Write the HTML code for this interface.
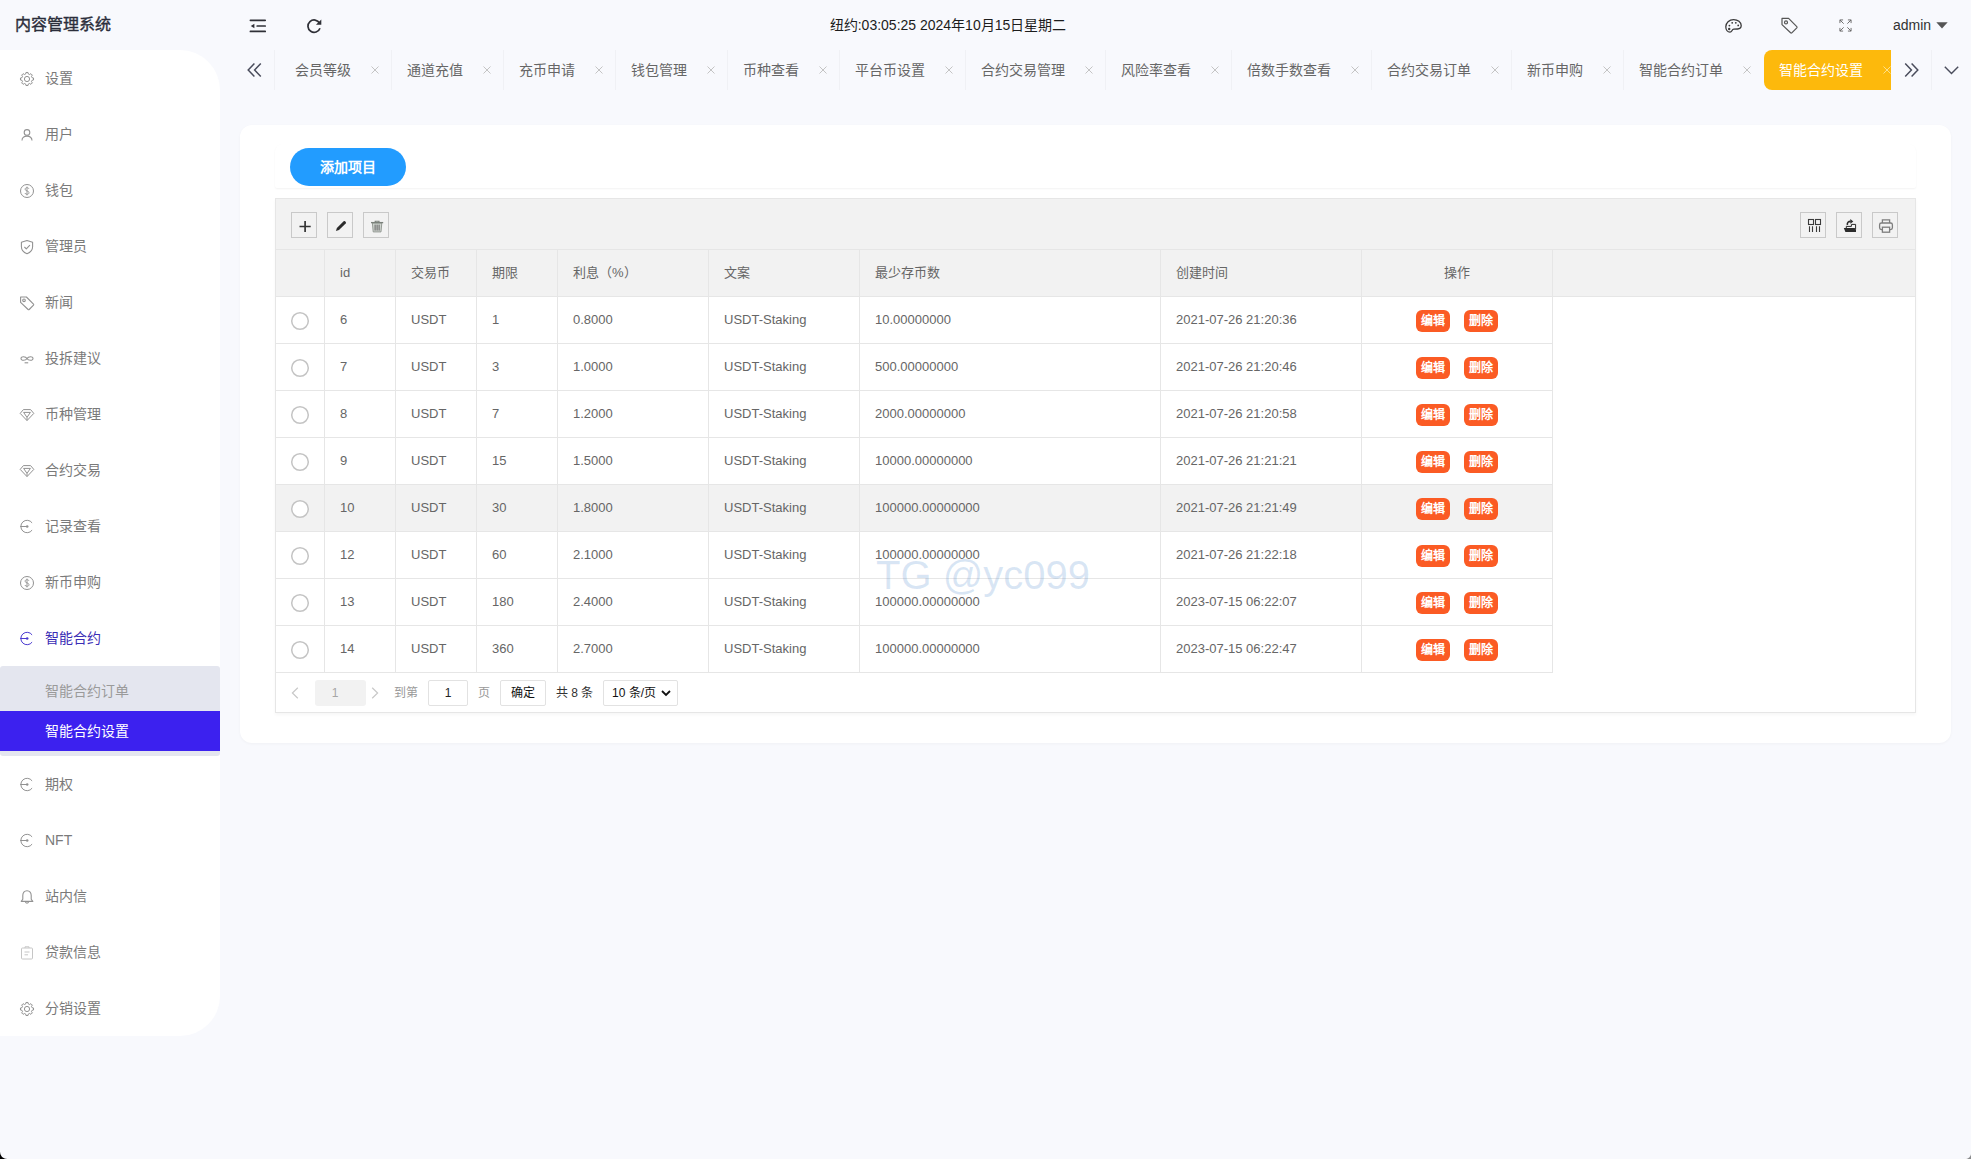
<!DOCTYPE html>
<html lang="zh-CN">
<head>
<meta charset="utf-8">
<title>内容管理系统</title>
<style>
*{box-sizing:border-box;margin:0;padding:0}
html,body{width:1971px;height:1159px;overflow:hidden}
body{position:relative;background:#f8f9fd;font-family:"Liberation Sans",sans-serif;font-size:14px;color:#666;line-height:1}
svg{display:block;overflow:visible}
.abs{position:absolute}
/* ---------- sidebar ---------- */
.logo{position:absolute;left:15px;top:0;height:50px;line-height:49px;font-size:16px;font-weight:500;-webkit-text-stroke:.4px #2b2e3b;color:#2b2e3b;white-space:nowrap;letter-spacing:0}
.side{position:absolute;left:0;top:50px;width:220px;height:986px;background:#fff;border-radius:0 40px 40px 0;overflow:hidden}
.nav{position:absolute;left:0;width:220px;height:56px;line-height:56px;color:#7a7a7a;white-space:nowrap}
.nav svg{position:absolute;left:19px;top:21px;width:16px;height:16px;color:#929292}
.nav.on svg{color:#4a3ad0}
.nav span{position:absolute;left:45px;top:0}
.nav.on{color:#3b2db5}
.sub{position:absolute;left:0;top:616px;width:220px;height:90px;background:#e4e6ef;border-radius:3px}
.sub div{position:absolute;left:0;width:220px;height:40px;line-height:40px;padding-left:45px;color:#9a9a9a;white-space:nowrap}
.sub .act{background:#3c21ef;color:#fff}
/* ---------- header ---------- */
.clock{position:absolute;left:748px;width:400px;top:0;height:50px;line-height:50px;text-align:center;color:#1c1c1c;white-space:nowrap}
.admin{position:absolute;left:1893px;top:0;height:50px;line-height:50px;color:#333;white-space:nowrap}
/* ---------- tabs ---------- */
.tab{position:absolute;top:50px;height:40px;line-height:40px;color:#666;white-space:nowrap;border-right:1px solid #f0f1f5}
.tab span{position:absolute;left:15px;top:0}
.tab svg{position:absolute;right:12px;top:16px;width:8px;height:8px}
.tab.act{background:#fdb90c;color:#fff;border:0;border-radius:8px 0 0 8px;overflow:hidden}
.vsep{position:absolute;top:50px;width:1px;height:40px;background:#f0f1f5}
/* ---------- card ---------- */
.card{position:absolute;left:240px;top:125px;width:1711px;height:618px;background:#fff;border-radius:12px;box-shadow:0 1px 3px rgba(0,0,0,.035)}
.inner{position:absolute;left:275px;top:144px;width:1641px;height:44px;background:#fff;border-radius:8px 8px 2px 2px;box-shadow:0 1px 2px rgba(0,0,0,.05)}
.addbtn{position:absolute;left:290px;top:148px;width:116px;height:38px;line-height:38px;border-radius:19px;background:#229cff;color:#fff;font-weight:bold;text-align:center;white-space:nowrap}

/* ---------- table ---------- */
.tbox{position:absolute;left:275px;top:198px;width:1641px;height:515px;border:1px solid #e6e6e6;background:#fff;box-shadow:0 2px 3px rgba(0,0,0,.035)}
.tool{position:absolute;left:276px;top:199px;width:1639px;height:51px;background:#f2f2f2;border-bottom:1px solid #e6e6e6}
.tb{position:absolute;top:212px;width:26px;height:26px;border:1px solid #c9c9c9}
.tb svg{position:absolute;left:0;top:0;width:24px;height:24px}
.thead{position:absolute;left:276px;top:250px;width:1639px;height:47px;background:#f2f2f2;border-bottom:1px solid #e6e6e6}
.tr{position:absolute;left:276px;width:1277px;height:47px;border-bottom:1px solid #e6e6e6;background:#fff}
.tr.hov{background:#f2f2f2}
.c{position:absolute;top:0;height:46px;line-height:46px;font-size:13px;padding-left:15px;border-right:1px solid #e6e6e6;color:#666;white-space:nowrap;overflow:hidden}
.c0{left:0;width:49px}.c1{left:49px;width:71px}.c2{left:120px;width:81px}.c3{left:201px;width:81px}.c4{left:282px;width:151px}.c5{left:433px;width:151px}.c6{left:584px;width:301px}.c7{left:885px;width:201px}.c8{left:1086px;width:191px;padding-left:0}
.thead .c8{text-align:center}
.tr .c{line-height:45px}
.radio{position:absolute;left:14px;top:13.5px;width:20px;height:20px}
.ab{position:absolute;top:13px;width:34px;height:22px;line-height:22px;border-radius:6px;background:#fb5b24;color:#fff;font-size:12px;font-weight:bold;text-align:center}
.ab.e{left:54px}.ab.d{left:102px}
/* ---------- pager ---------- */
.pg{position:absolute;top:680px;height:26px;line-height:26px;font-size:12px;color:#333;white-space:nowrap}
.pgb{border:1px solid #e2e2e2;border-radius:2px;background:#fff;text-align:center;line-height:24px}
.wm{position:absolute;left:876px;top:553px;font-size:40px;line-height:44px;color:rgba(80,140,205,.22);white-space:nowrap;letter-spacing:0}
</style>
</head>
<body>
<svg width="0" height="0" style="position:absolute">
<defs>
<g id="i-gear" fill="none" stroke="currentColor" stroke-width="1"><path d="M14.52 6.97 L14.52 9.03 L13.04 9.29 L12.48 10.65 L13.34 11.88 L11.88 13.34 L10.65 12.48 L9.29 13.04 L9.03 14.52 L6.97 14.52 L6.71 13.04 L5.35 12.48 L4.12 13.34 L2.66 11.88 L3.52 10.65 L2.96 9.29 L1.48 9.03 L1.48 6.97 L2.96 6.71 L3.52 5.35 L2.66 4.12 L4.12 2.66 L5.35 3.52 L6.71 2.96 L6.97 1.48 L9.03 1.48 L9.29 2.96 L10.65 3.52 L11.88 2.66 L13.34 4.12 L12.48 5.35 L13.04 6.71Z" stroke-linejoin="round"/><circle cx="8" cy="8" r="2.6"/></g>
<g id="i-user" fill="none" stroke="currentColor" stroke-width="1.1"><circle cx="8" cy="5.4" r="2.8"/><path d="M3 13.4 C3 10.6 5.2 9.1 8 9.1 S13 10.6 13 13.4"/></g>
<g id="i-dollar" fill="none" stroke="currentColor" stroke-width="1"><circle cx="8" cy="8" r="6.5"/><path d="M10 5.9 C9.6 5 8.8 4.7 8 4.7 C6.9 4.7 6.1 5.3 6.1 6.2 C6.1 8.3 10 7.5 10 9.7 C10 10.7 9.1 11.3 8 11.3 C7 11.3 6.2 10.9 5.9 10 M8 3.6 V12.4" stroke-width=".9"/></g>
<g id="i-shield" fill="none" stroke="currentColor" stroke-width="1.1" stroke-linejoin="round"><path d="M8 1.4 L13.6 3.3 V7.8 C13.6 11.4 10.6 13.8 8 14.8 C5.4 13.8 2.4 11.4 2.4 7.8 V3.3 Z"/><path d="M5.4 8 L7.3 9.9 L10.9 6.2"/></g>
<g id="i-tag" fill="none" stroke="currentColor" stroke-width="1.1" stroke-linejoin="round"><path d="M1.6 2 H7.4 L14.5 9.1 a.8 .8 0 0 1 0 1.1 L10.2 14.5 a.8 .8 0 0 1 -1.1 0 L1.6 7.4 Z"/><circle cx="5" cy="5.3" r="1.3"/></g>
<g id="i-link" fill="none" stroke="currentColor" stroke-width="1.1"><path d="M8 7.5 C6.6 5.2 2 5 2 7.5 S6.6 9.8 8 7.5 S14 5 14 7.5 S9.4 9.8 8 7.5Z"/><path d="M5.6 11.8 H9.2"/></g>
<g id="i-diamond" fill="none" stroke="currentColor" stroke-width="1" stroke-linejoin="round"><path d="M4.4 2.6 H11.6 L14.8 6.4 L8 13.6 L1.2 6.4 Z"/><path d="M4.6 5.4 H11.4 L8 10.4 Z M8 10.4 V13.4"/></g>
<g id="i-dotc" fill="none" stroke="currentColor" stroke-width="1"><path d="M13.1 3.9 A6.2 6.2 0 1 0 13.1 11.1"/><path d="M1.2 7.5 H8"/><circle cx="8.2" cy="7.5" r="1.25" fill="currentColor" stroke="none"/></g>
<g id="i-bell" fill="none" stroke="currentColor" stroke-width="1.1" stroke-linejoin="round"><path d="M8 1.8 C5.2 1.8 3.8 3.9 3.8 6.6 V10.2 L2.2 12.4 H13.8 L12.2 10.2 V6.6 C12.2 3.9 10.8 1.8 8 1.8 Z"/><path d="M6.4 12.6 a1.6 1.6 0 0 0 3.2 0"/></g>
<g id="i-clip" fill="none" stroke="currentColor" stroke-width="1"><rect x="2.5" y="3" width="11" height="11" rx="1"/><path d="M6 3 V1.8 H10 V3 M5.5 7 H10.5 M5.5 9.8 H9"/></g>
<g id="i-x" fill="none" stroke="currentColor" stroke-width="1"><path d="M.5 .5 L7.5 7.5 M7.5 .5 L.5 7.5"/></g>
</defs>
</svg>
<!-- SIDEBAR -->
<div class="logo">内容管理系统</div>
<div class="side">
<div class="nav" style="top:0px"><svg viewBox="0 0 16 16"><use href="#i-gear"/></svg><span>设置</span></div>
<div class="nav" style="top:56px"><svg viewBox="0 0 16 16"><use href="#i-user"/></svg><span>用户</span></div>
<div class="nav" style="top:112px"><svg viewBox="0 0 16 16"><use href="#i-dollar"/></svg><span>钱包</span></div>
<div class="nav" style="top:168px"><svg viewBox="0 0 16 16"><use href="#i-shield"/></svg><span>管理员</span></div>
<div class="nav" style="top:224px"><svg viewBox="0 0 16 16"><use href="#i-tag"/></svg><span>新闻</span></div>
<div class="nav" style="top:280px"><svg viewBox="0 0 16 16"><use href="#i-link"/></svg><span>投拆建议</span></div>
<div class="nav" style="top:336px"><svg viewBox="0 0 16 16"><use href="#i-diamond"/></svg><span>币种管理</span></div>
<div class="nav" style="top:392px"><svg viewBox="0 0 16 16"><use href="#i-diamond"/></svg><span>合约交易</span></div>
<div class="nav" style="top:448px"><svg viewBox="0 0 16 16"><use href="#i-dotc"/></svg><span>记录查看</span></div>
<div class="nav" style="top:504px"><svg viewBox="0 0 16 16"><use href="#i-dollar"/></svg><span>新币申购</span></div>
<div class="nav on" style="top:560px"><svg viewBox="0 0 16 16"><use href="#i-dotc"/></svg><span>智能合约</span></div>
<div class="sub"><div style="top:5px">智能合约订单</div><div class="act" style="top:45px">智能合约设置</div></div>
<div class="nav" style="top:706px;"><svg viewBox="0 0 16 16"><use href="#i-dotc"/></svg><span>期权</span></div>
<div class="nav" style="top:762px;"><svg viewBox="0 0 16 16"><use href="#i-dotc"/></svg><span>NFT</span></div>
<div class="nav" style="top:818px;"><svg viewBox="0 0 16 16"><use href="#i-bell"/></svg><span>站内信</span></div>
<div class="nav" style="top:874px;"><svg viewBox="0 0 16 16" style="color:#c6c6c6"><use href="#i-clip"/></svg><span>贷款信息</span></div>
<div class="nav" style="top:930px;"><svg viewBox="0 0 16 16"><use href="#i-gear"/></svg><span>分销设置</span></div>
</div>
<!-- HEADER -->
<div id="header">
<svg class="abs" style="left:250px;top:19px" width="16" height="14" viewBox="0 0 16 14"><path d="M.4 1.3 H15.2 M7.2 7 H15.2 M.4 12.4 H15.2" stroke="#2f3037" stroke-width="1.7" fill="none" stroke-linecap="round"/><path d="M.8 7 L4.4 4.8 V9.2 Z" fill="#2f3037"/></svg>
<svg class="abs" style="left:306px;top:18px" width="16" height="16" viewBox="0 0 16 16"><path d="M13.6 5.2 A6.2 6.2 0 1 0 14 10.2" stroke="#2f3037" stroke-width="1.7" fill="none"/><path d="M15.3 1.4 V6.8 H9.9 Z" fill="#2f3037"/></svg>
<div class="clock">纽约:03:05:25 2024年10月15日星期二</div>
<svg class="abs" style="left:1725px;top:18px" width="17" height="16" viewBox="0 0 17 16" fill="none" stroke="#3a3a3a" stroke-width="1.3"><path d="M8.6 1.6 C4.2 1.6 .8 4.8 .8 8.8 C.8 11.8 2.6 14.2 5 14.2 C7.2 14.2 6.6 11.4 8.8 11.2 L12.6 11 C14.8 10.9 16.2 9.6 16.2 7.6 C16.2 4.2 12.8 1.6 8.6 1.6 Z"/><circle cx="4.4" cy="7.6" r=".9" fill="#3a3a3a" stroke="none"/><circle cx="7.2" cy="4.8" r=".9" fill="#3a3a3a" stroke="none"/><circle cx="10.8" cy="4.8" r=".9" fill="#3a3a3a" stroke="none"/><circle cx="13.2" cy="7.4" r=".9" fill="#3a3a3a" stroke="none"/><circle cx="4.2" cy="11" r="1.2" fill="#3a3a3a" stroke="none"/></svg>
<svg class="abs" style="left:1781px;top:17px" width="17" height="17" viewBox="0 0 17 17" fill="none" stroke="#555" stroke-width="1.2" stroke-linejoin="round"><path d="M1 1.4 H7.6 L15.8 9.6 a.9 .9 0 0 1 0 1.2 L10.8 15.8 a.9 .9 0 0 1 -1.2 0 L1 7.6 Z"/><circle cx="5" cy="5.4" r="1.5"/></svg>
<svg class="abs" style="left:1838.5px;top:19.2px" width="13" height="13" viewBox="0 0 14 14" fill="none" stroke="#666" stroke-width="1"><path d="M1 4.4 V1 H4.4 M1 1 L5 5 M9.6 1 H13 V4.4 M13 1 L9 5 M1 9.6 V13 H4.4 M1 13 L5 9 M13 9.6 V13 H9.6 M13 13 L9 9"/></svg>
<div class="admin">admin</div>
<svg class="abs" style="left:1936px;top:22px" width="12" height="7" viewBox="0 0 12 7"><path d="M.3 .3 H11.7 L6 6.6 Z" fill="#555"/></svg>
</div>
<!-- TABS -->
<div id="tabs">
<svg class="abs" style="left:247px;top:63px" width="15" height="14" viewBox="0 0 15 14" fill="none" stroke="#4a4d5c" stroke-width="1.5"><path d="M7.4 .6 L1.2 7 L7.4 13.4 M13.8 .6 L7.6 7 L13.8 13.4"/></svg>
<div class="vsep" style="left:274px"></div>
<div class="tab" style="left:280px;width:112px"><span>会员等级</span><svg viewBox="0 0 8 8" style="color:#c4c4c4"><use href="#i-x"/></svg></div>
<div class="tab" style="left:392px;width:112px"><span>通道充值</span><svg viewBox="0 0 8 8" style="color:#c4c4c4"><use href="#i-x"/></svg></div>
<div class="tab" style="left:504px;width:112px"><span>充币申请</span><svg viewBox="0 0 8 8" style="color:#c4c4c4"><use href="#i-x"/></svg></div>
<div class="tab" style="left:616px;width:112px"><span>钱包管理</span><svg viewBox="0 0 8 8" style="color:#c4c4c4"><use href="#i-x"/></svg></div>
<div class="tab" style="left:728px;width:112px"><span>币种查看</span><svg viewBox="0 0 8 8" style="color:#c4c4c4"><use href="#i-x"/></svg></div>
<div class="tab" style="left:840px;width:126px"><span>平台币设置</span><svg viewBox="0 0 8 8" style="color:#c4c4c4"><use href="#i-x"/></svg></div>
<div class="tab" style="left:966px;width:140px"><span>合约交易管理</span><svg viewBox="0 0 8 8" style="color:#c4c4c4"><use href="#i-x"/></svg></div>
<div class="tab" style="left:1106px;width:126px"><span>风险率查看</span><svg viewBox="0 0 8 8" style="color:#c4c4c4"><use href="#i-x"/></svg></div>
<div class="tab" style="left:1232px;width:140px"><span>倍数手数查看</span><svg viewBox="0 0 8 8" style="color:#c4c4c4"><use href="#i-x"/></svg></div>
<div class="tab" style="left:1372px;width:140px"><span>合约交易订单</span><svg viewBox="0 0 8 8" style="color:#c4c4c4"><use href="#i-x"/></svg></div>
<div class="tab" style="left:1512px;width:112px"><span>新币申购</span><svg viewBox="0 0 8 8" style="color:#c4c4c4"><use href="#i-x"/></svg></div>
<div class="tab" style="left:1624px;width:140px;border-right:0"><span>智能合约订单</span><svg viewBox="0 0 8 8" style="color:#c4c4c4;right:13px"><use href="#i-x"/></svg></div>
<div class="tab act" style="left:1764px;width:127px"><span style="left:15px">智能合约设置</span><svg viewBox="0 0 8 8" style="color:#fde08a;right:0px;left:119px"><use href="#i-x"/></svg></div>
<svg class="abs" style="left:1904px;top:63px" width="15" height="14" viewBox="0 0 15 14" fill="none" stroke="#4a4d5c" stroke-width="1.5"><path d="M1.2 .6 L7.4 7 L1.2 13.4 M7.6 .6 L13.8 7 L7.6 13.4"/></svg>
<div class="vsep" style="left:1931px"></div>
<svg class="abs" style="left:1944px;top:66px" width="15" height="9" viewBox="0 0 15 9" fill="none" stroke="#4a4d5c" stroke-width="1.4"><path d="M.8 .8 L7.5 7.6 L14.2 .8"/></svg>
</div>
<!-- CONTENT -->
<div class="card"></div>
<div class="inner"></div>
<div class="addbtn">添加项目</div>
<div id="table">
<div class="tbox"></div>
<div class="tool"></div>
<div class="tb" style="left:291px"><svg viewBox="0 0 24 24"><path d="M13.1 8 V19 M7.5 13.5 H18.7" stroke="#333" stroke-width="1.7" fill="none"/></svg></div>
<div class="tb" style="left:327px"><svg viewBox="0 0 24 24"><path d="M7.9 17.9 L8.9 15 L15.6 8.3 a1.1 1.1 0 0 1 1.5 0 L17.7 8.9 a1.1 1.1 0 0 1 0 1.5 L11 17.1 Z" fill="#2b2b2b"/></svg></div>
<div class="tb" style="left:363px"><svg viewBox="0 0 24 24"><path d="M8.4 10 H17.8 L17 18.9 H9.2 Z" fill="#d0d5d0" stroke="#8b928b" stroke-width=".9"/><path d="M7 9.6 H19.2" stroke="#7a807a" stroke-width="1.3"/><path d="M11.2 9 V8.2 H15 V9" stroke="#7a807a" stroke-width="1.1" fill="none"/><path d="M11.1 11.6 V17.6 M13.1 11.6 V17.6 M15.1 11.6 V17.6" stroke="#555" stroke-width=".9"/></svg></div>
<div class="tb" style="left:1800px"><svg viewBox="0 0 24 24" fill="none" stroke="#3a3a3a" stroke-width="1.1"><rect x="7.5" y="6.5" width="5" height="5"/><rect x="14.5" y="6.5" width="5" height="5"/><path d="M8.5 13.2 V19 M11.5 13.2 V19 M15.5 13.2 V19 M18.5 13.2 V19"/></svg></div>
<div class="tb" style="left:1836px"><svg viewBox="0 0 24 24"><path d="M6.8 15.1 H17.6 L19 16.6 V19 H8.4 Z" fill="#2b2b2b"/><path d="M9.3 15.1 V13.4 H14.4 V11.4 H18.6 V16.4" fill="none" stroke="#2b2b2b" stroke-width="1"/><path d="M10.4 12 C10 9.6 11.4 8.4 13.6 8.4" fill="none" stroke="#2b2b2b" stroke-width="1.6"/><path d="M13.3 5.9 L16.3 8.4 L13.3 10.7 Z" fill="#2b2b2b"/></svg></div>
<div class="tb" style="left:1872px"><svg viewBox="0 0 24 24" fill="none" stroke="#7d7d7d" stroke-width="1.3"><path d="M9.4 10 V6.8 H16.6 V10"/><rect x="6.6" y="10" width="12.8" height="6.6" rx="1.8"/><rect x="9.4" y="14.2" width="7.2" height="5" fill="#f2f2f2"/></svg></div>
<div class="thead"><div class="c c0"></div><div class="c c1">id</div><div class="c c2">交易币</div><div class="c c3">期限</div><div class="c c4">利息（%）</div><div class="c c5">文案</div><div class="c c6">最少存币数</div><div class="c c7">创建时间</div><div class="c c8">操作</div></div>
<div class="tr" style="top:297px"><div class="c c0"><svg class="radio" viewBox="0 0 20 20"><circle cx="10" cy="10" r="8.3" fill="#fff" stroke="#c4c4c4" stroke-width="1.5"/></svg></div><div class="c c1">6</div><div class="c c2">USDT</div><div class="c c3">1</div><div class="c c4">0.8000</div><div class="c c5">USDT-Staking</div><div class="c c6">10.00000000</div><div class="c c7">2021-07-26 21:20:36</div><div class="c c8"><b class="ab e">编辑</b><b class="ab d">删除</b></div></div>
<div class="tr" style="top:344px"><div class="c c0"><svg class="radio" viewBox="0 0 20 20"><circle cx="10" cy="10" r="8.3" fill="#fff" stroke="#c4c4c4" stroke-width="1.5"/></svg></div><div class="c c1">7</div><div class="c c2">USDT</div><div class="c c3">3</div><div class="c c4">1.0000</div><div class="c c5">USDT-Staking</div><div class="c c6">500.00000000</div><div class="c c7">2021-07-26 21:20:46</div><div class="c c8"><b class="ab e">编辑</b><b class="ab d">删除</b></div></div>
<div class="tr" style="top:391px"><div class="c c0"><svg class="radio" viewBox="0 0 20 20"><circle cx="10" cy="10" r="8.3" fill="#fff" stroke="#c4c4c4" stroke-width="1.5"/></svg></div><div class="c c1">8</div><div class="c c2">USDT</div><div class="c c3">7</div><div class="c c4">1.2000</div><div class="c c5">USDT-Staking</div><div class="c c6">2000.00000000</div><div class="c c7">2021-07-26 21:20:58</div><div class="c c8"><b class="ab e">编辑</b><b class="ab d">删除</b></div></div>
<div class="tr" style="top:438px"><div class="c c0"><svg class="radio" viewBox="0 0 20 20"><circle cx="10" cy="10" r="8.3" fill="#fff" stroke="#c4c4c4" stroke-width="1.5"/></svg></div><div class="c c1">9</div><div class="c c2">USDT</div><div class="c c3">15</div><div class="c c4">1.5000</div><div class="c c5">USDT-Staking</div><div class="c c6">10000.00000000</div><div class="c c7">2021-07-26 21:21:21</div><div class="c c8"><b class="ab e">编辑</b><b class="ab d">删除</b></div></div>
<div class="tr hov" style="top:485px"><div class="c c0"><svg class="radio" viewBox="0 0 20 20"><circle cx="10" cy="10" r="8.3" fill="#fff" stroke="#c4c4c4" stroke-width="1.5"/></svg></div><div class="c c1">10</div><div class="c c2">USDT</div><div class="c c3">30</div><div class="c c4">1.8000</div><div class="c c5">USDT-Staking</div><div class="c c6">100000.00000000</div><div class="c c7">2021-07-26 21:21:49</div><div class="c c8"><b class="ab e">编辑</b><b class="ab d">删除</b></div></div>
<div class="tr" style="top:532px"><div class="c c0"><svg class="radio" viewBox="0 0 20 20"><circle cx="10" cy="10" r="8.3" fill="#fff" stroke="#c4c4c4" stroke-width="1.5"/></svg></div><div class="c c1">12</div><div class="c c2">USDT</div><div class="c c3">60</div><div class="c c4">2.1000</div><div class="c c5">USDT-Staking</div><div class="c c6">100000.00000000</div><div class="c c7">2021-07-26 21:22:18</div><div class="c c8"><b class="ab e">编辑</b><b class="ab d">删除</b></div></div>
<div class="tr" style="top:579px"><div class="c c0"><svg class="radio" viewBox="0 0 20 20"><circle cx="10" cy="10" r="8.3" fill="#fff" stroke="#c4c4c4" stroke-width="1.5"/></svg></div><div class="c c1">13</div><div class="c c2">USDT</div><div class="c c3">180</div><div class="c c4">2.4000</div><div class="c c5">USDT-Staking</div><div class="c c6">100000.00000000</div><div class="c c7">2023-07-15 06:22:07</div><div class="c c8"><b class="ab e">编辑</b><b class="ab d">删除</b></div></div>
<div class="tr" style="top:626px"><div class="c c0"><svg class="radio" viewBox="0 0 20 20"><circle cx="10" cy="10" r="8.3" fill="#fff" stroke="#c4c4c4" stroke-width="1.5"/></svg></div><div class="c c1">14</div><div class="c c2">USDT</div><div class="c c3">360</div><div class="c c4">2.7000</div><div class="c c5">USDT-Staking</div><div class="c c6">100000.00000000</div><div class="c c7">2023-07-15 06:22:47</div><div class="c c8"><b class="ab e">编辑</b><b class="ab d">删除</b></div></div>
<svg class="abs" style="left:291px;top:687px" width="8" height="12" viewBox="0 0 8 12" fill="none" stroke="#c8c8c8" stroke-width="1.2"><path d="M6.8 .8 L1.4 6 L6.8 11.2"/></svg>
<div class="pg" style="left:315px;width:51px;background:#f2f2f2;border-radius:3px;text-align:center;color:#a6a6a6;padding-right:11px">1</div>
<svg class="abs" style="left:371px;top:687px" width="8" height="12" viewBox="0 0 8 12" fill="none" stroke="#c8c8c8" stroke-width="1.2"><path d="M1.2 .8 L6.6 6 L1.2 11.2"/></svg>
<div class="pg" style="left:394px;color:#999">到第</div>
<div class="pg pgb" style="left:428px;width:40px;color:#222">1</div>
<div class="pg" style="left:478px;color:#999">页</div>
<div class="pg pgb" style="left:500px;width:46px;color:#111">确定</div>
<div class="pg" style="left:556px">共 8 条</div>
<div class="pg pgb" style="left:603px;width:75px;text-align:left;padding-left:8px;color:#111">10 条/页<svg class="abs" style="left:57px;top:9px" width="10" height="7" viewBox="0 0 10 7" fill="none" stroke="#111" stroke-width="1.8"><path d="M1 1 L5 5 L9 1"/></svg></div>
<div class="wm">TG @yc099</div>
</div>
<div class="abs" style="left:0;top:1152px;width:7px;height:7px;background:radial-gradient(circle at 100% 0,rgba(0,0,0,0) 6.4px,#000 7.4px)"></div>
<div class="abs" style="left:1965px;top:1153px;width:6px;height:6px;background:radial-gradient(circle at 0 0,rgba(0,0,0,0) 5.6px,rgba(0,0,0,.45) 6.6px)"></div>

</body>
</html>
